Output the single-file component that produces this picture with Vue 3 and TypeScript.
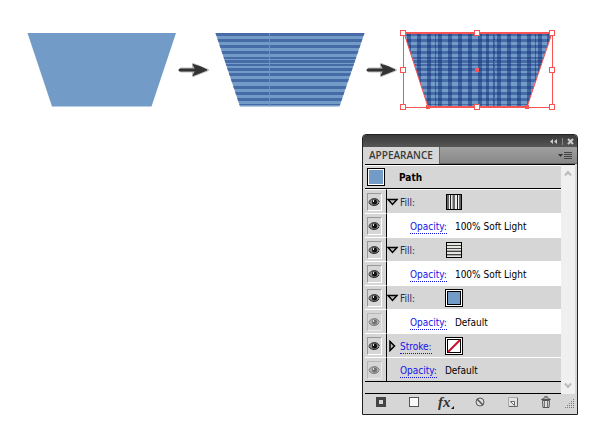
<script setup lang="ts">
interface Row {
  kind: 'fill' | 'stroke' | 'opacity'
  label: string
  value?: string
  swatch?: 'vertical' | 'horizontal' | 'solid' | 'none'
  grey?: boolean
  dim?: boolean
  nested?: boolean
}

const rows: Row[] = [
  { kind: 'fill', label: 'Fill:', swatch: 'vertical', grey: true },
  { kind: 'opacity', label: 'Opacity:', value: '100% Soft Light', nested: true },
  { kind: 'fill', label: 'Fill:', swatch: 'horizontal', grey: true },
  { kind: 'opacity', label: 'Opacity:', value: '100% Soft Light', nested: true },
  { kind: 'fill', label: 'Fill:', swatch: 'solid', grey: true },
  { kind: 'opacity', label: 'Opacity:', value: 'Default', nested: true, dim: true },
  { kind: 'stroke', label: 'Stroke:', swatch: 'none', grey: true },
  { kind: 'opacity', label: 'Opacity:', value: 'Default', grey: true, dim: true },
]

// [offset, thickness] of the dark bands in the striped pattern
const bands: [number, number][] = [
  [0, 3], [6, 3], [12, 3], [18, 3], [24, 2], [27, 3], [31, 2], [35, 3],
  [40, 3], [46, 3], [53, 3], [59, 3], [65, 3], [71, 1],
]
// [offset, thickness] of the vertical bands in the plaid pattern
const columns: [number, number][] = [
  [7, 4], [17, 4], [27, 4], [35, 1], [38, 4], [48, 4], [58, 4], [68, 4],
  [78, 4], [86, 3], [93, 2], [97, 4], [107, 4], [117, 4],
  [127, 4], [135, 1], [138, 4], [147, 3],
]
const handles: [number, number][] = [
  [3, 5], [77, 5], [152, 5], [3, 42], [152, 42], [3, 79], [77, 79], [152, 79],
]
</script>

<template>
  <main class="page">
    <section class="steps" aria-label="Pattern steps">
      <svg class="plain" width="150" height="84" viewBox="0 0 150 84">
        <path d="M.5 5H149L124.500 78.500H25Z" fill="#729bc7" />
      </svg>
      <svg class="arrow" width="32" height="18" viewBox="0 0 32 18">
        <path d="M3 7.500H15V3L30 9 15 15V10.500H3Z" fill="#aaa" stroke="#bbb" stroke-width="2" stroke-linejoin="round" />
        <path d="M2 9H18" stroke="#333" stroke-width="3" stroke-linecap="round" />
        <path d="M15 3.500Q22 5 29 9Q22 12 15 14.500L18 9Z" fill="#333" stroke="#333" stroke-linejoin="round" />
      </svg>
      <svg class="striped" width="150" height="84" viewBox="0 0 150 84">
        <clipPath id="pocket-b"><path d="M.5 5H149.500L124.500 78.500H25Z" /></clipPath>
        <g clip-path="url(#pocket-b)">
          <rect width="150" height="84" fill="#729bc7" />
          <rect v-for="b in bands" :key="b[0]" :y="b[0] + 5" width="150" :height="b[1]" fill="#466ba6" />
          <rect x="54" width="1" height="84" fill="#729bc7" opacity=".75" />
        </g>
      </svg>
      <svg class="arrow" width="32" height="18" viewBox="0 0 32 18">
        <path d="M3 7.500H15V3L30 9 15 15V10.500H3Z" fill="#aaa" stroke="#bbb" stroke-width="2" stroke-linejoin="round" />
        <path d="M2 9H18" stroke="#333" stroke-width="3" stroke-linecap="round" />
        <path d="M15 3.500Q22 5 29 9Q22 12 15 14.500L18 9Z" fill="#333" stroke="#333" stroke-linejoin="round" />
      </svg>
      <svg class="plaid" width="156" height="84" viewBox="0 0 156 84">
        <clipPath id="pocket-c"><path d="M4 5H152L127 79H28Z" /></clipPath>
        <g clip-path="url(#pocket-c)">
          <rect width="156" height="84" fill="#729bc7" />
          <rect v-for="b in bands" :key="b[0]" :y="b[0] + 5" width="156" :height="b[1]" fill="#466ba6" />
          <rect v-for="c in columns" :key="c[0]" class="weave" :x="c[0]" :width="c[1]" height="84" />
          <path d="M94.500 5V79" stroke="#466ba6" stroke-dasharray="4 3" />
        </g>
        <g fill="none" stroke="#f95454">
          <path d="M3.500 5.500H152.500V79.500H3.500Z" />
          <path d="M4 5L28 79M152 5L127 79" />
          <path d="M4 5H152M28 79H127" stroke-width="2" />
        </g>
        <path d="M75 40h4v4h-4ZM26 77h4v4h-4ZM125 77h4v4h-4Z" fill="#f95454" />
        <rect v-for="(h, i) in handles" :key="i" :x="h[0] - 2.500" :y="h[1] - 2.500" width="5" height="5" fill="#fff" stroke="#f95454" />
      </svg>
    </section>

    <section class="panel" aria-label="Appearance">
      <header class="titlebar">
        <button class="bare" aria-label="Collapse">
          <svg width="9" height="7" viewBox="0 0 9 7"><path d="M4 1V6L1 3.500ZM8 1V6L5 3.500Z" fill="#ccc" /></svg>
        </button>
        <span class="divider"></span>
        <button class="bare" aria-label="Close">
          <svg width="7" height="7" viewBox="0 0 7 7"><path d="M1 1L6 6M6 1L1 6" stroke="#ccc" stroke-width="2" /></svg>
        </button>
      </header>
      <div class="tabs">
        <button class="tab">APPEARANCE</button>
        <button class="bare menu" aria-label="Panel menu">
          <svg width="15" height="9" viewBox="0 0 15 9"><path d="M0 3H5L2.500 6Z" fill="#333" /><path d="M6 1.500H14M6 3.500H14M6 5.500H14M6 7.500H14" stroke="#444" /></svg>
        </button>
      </div>
      <div class="body">
        <div class="list">
          <div class="path-row">
            <span class="thumb"></span>
            <strong>Path</strong>
          </div>
          <div v-for="(row, i) in rows" :key="i" class="row" :class="{ grey: row.grey }">
            <button class="eye" :class="{ dim: row.dim }" aria-label="Toggle visibility">
              <svg width="12" height="11" viewBox="0 0 12 11">
                <path d="M.5 5.500Q3 1.500 6.500 1.500T11.500 5.500Q9 8.500 6 8.500T.5 5.500Z" fill="#888" />
                <path d="M.5 5Q3 1.500 6.500 1.500Q10 1.500 11.500 5M1 6Q3 8.500 6 8.500Q9.500 8.500 11 6" fill="none" stroke="#222" />
                <circle cx="6.500" cy="5" r="2.500" fill="#111" /><rect x="5" y="3" width="1" height="2" fill="#ddd" />
              </svg>
            </button>
            <div class="cell" :class="[row.kind, { nested: row.nested }]">
              <button v-if="row.kind !== 'opacity'" class="bare twist" aria-label="Expand">
                <svg v-if="row.kind === 'fill'" width="12" height="10" viewBox="0 0 12 10"><path d="M1 2.500H10L5.500 7.500Z" fill="#bbb" stroke="#000" stroke-width="1.500" /></svg>
                <svg v-else width="12" height="12" viewBox="0 0 12 12"><path d="M3 1.500V10.500L7.500 6Z" fill="#bbb" stroke="#000" stroke-width="1.500" /></svg>
              </button>
              <span v-if="row.kind === 'fill'" class="fill-label">{{ row.label }}</span>
              <a v-else href="#">{{ row.label }}</a>
              <span v-if="row.value" class="value">{{ row.value }}</span>
              <span v-if="row.swatch" class="slot">
                <svg width="18" height="18" viewBox="0 0 18 18">
                  <template v-if="row.swatch === 'vertical'">
                    <rect x="1.500" y="1.500" width="15" height="15" fill="#eee" stroke="#000" />
                    <path d="M3 2V16M9 2V16M15 2V16" stroke="#666" stroke-width="2" /><path d="M5.500 2V16M12.500 2V16" stroke="#222" /><path d="M7.500 2V16" stroke="#aaa" />
                  </template>
                  <template v-else-if="row.swatch === 'horizontal'">
                    <rect x="1.500" y="1.500" width="15" height="15" fill="#e4e8e0" stroke="#000" />
                    <path d="M2 4.500H16M2 7.500H16M2 10.500H16M2 13.500H16" stroke="#444" /><path d="M2 9.500H16M2 14.500H16" stroke="#aaa" />
                  </template>
                  <template v-else>
                    <rect x=".5" y=".5" width="17" height="17" fill="#fff" stroke="#000" />
                    <rect x="2.500" y="2.500" width="13" height="13" :fill="row.swatch === 'solid' ? '#729bc7' : '#fff'" stroke="#000" />
                    <path v-if="row.swatch === 'none'" d="M3 15L15 3" stroke="#c8102e" stroke-width="2" />
                  </template>
                </svg>
              </span>
            </div>
          </div>
          <div class="drop"></div>
        </div>
        <div class="scroll">
          <button class="bare" aria-label="Scroll up"><svg width="8" height="7" viewBox="0 0 8 7"><path d="M1 5.500L4 2L7 5.500" fill="none" stroke="#bbb" stroke-width="2" /></svg></button>
          <button class="bare" aria-label="Scroll down"><svg width="8" height="7" viewBox="0 0 8 7"><path d="M1 1.500L4 5L7 1.500" fill="none" stroke="#bbb" stroke-width="2" /></svg></button>
        </div>
      </div>
      <footer class="tools">
        <div class="icons">
          <button class="bare" aria-label="Add stroke"><svg width="18" height="14" viewBox="0 0 18 14"><rect x="5.500" y="3.500" width="7" height="7" fill="#d6d6d6" stroke="#444" stroke-width="3" /></svg></button>
          <button class="bare" aria-label="Add fill"><svg width="18" height="14" viewBox="0 0 18 14"><rect x="4.500" y="2.500" width="9" height="9" fill="#fafafa" stroke="#555" /></svg></button>
          <button class="bare fx" aria-label="Add effect"><i>fx</i><svg width="3" height="3" viewBox="0 0 3 3"><path d="M3 0V3H0Z" fill="#111" /></svg></button>
          <button class="bare" aria-label="Clear appearance"><svg width="18" height="14" viewBox="0 0 18 14"><circle cx="9" cy="7" r="4" fill="#ddd" stroke="#555" /><path d="M6 4L12 10" stroke="#555" stroke-width="1.500" /></svg></button>
          <button class="bare" aria-label="Duplicate item"><svg width="18" height="14" viewBox="0 0 18 14"><path d="M4.500 2.500H13.500V11.500H4.500Z" fill="#e4e4e4" stroke="#aaa" /><path d="M13.500 3V11.500H5" fill="none" stroke="#666" /><path d="M6.500 6.500H10.500V10.500Z" fill="#fff" stroke="#666" /></svg></button>
          <button class="bare" aria-label="Delete item"><svg width="18" height="14" viewBox="0 0 18 14"><path d="M5.500 5.500H12.500L12 12.500H6Z" fill="#ddd" stroke="#555" /><path d="M4.500 4.500Q9 1 13.500 4.500Z" fill="#eee" stroke="#555" /><path d="M7.500 2.500V1.500H10.500V2.500M7.500 6V12M10.500 6V12" fill="none" stroke="#777" /></svg></button>
        </div>
        <svg class="grip" width="10" height="10" viewBox="0 0 10 10"><path d="M8 .5H10M6 2.500H10M4 4.500H10M2 6.500H10M0 8.500H10" stroke="#777" stroke-dasharray="1 1" /></svg>
      </footer>
    </section>
  </main>
</template>

<style>
body {
  background: #fff;
}
</style>

<style scoped>
.page {
  font: 10px/14px "DejaVu Sans Condensed", "DejaVu Sans", "Noto Sans", sans-serif;
  color: #000;
  padding: 28px 22px 0 27px;
}
.steps {
  display: flex;
  align-items: center;
}
.arrow {
  margin: 0 4px 0 1px;
}
.striped {
  margin-left: 1px;
}
.plaid {
  margin-left: -2px;
}
svg {
  display: block;
  flex: none;
}
.weave {
  fill: #0f2f77;
  opacity: 0.5;
}
.panel {
  box-sizing: border-box;
  width: fit-content;
  margin: 22px 0 0 auto;
  border: 1px solid #222;
  border-radius: 4px 4px 0 0;
  background: #d6d6d6;
  overflow: hidden;
}
button {
  font: inherit;
  color: inherit;
  margin: 0;
  border: 0;
}
.bare {
  padding: 0;
  background: none;
}
.titlebar {
  display: flex;
  align-items: center;
  justify-content: flex-end;
  gap: 4px;
  height: 12px;
  padding-right: 3px;
  background: linear-gradient(#3a3a3a, #565656);
}
.divider {
  width: 1px;
  height: 7px;
  background: #888;
}
.tabs {
  display: flex;
  align-items: stretch;
  justify-content: space-between;
  height: 17px;
  background: linear-gradient(#a0a0a0, #888);
  border-bottom: 1px solid #666;
  box-sizing: border-box;
}
.tab {
  margin-bottom: -1px;
  padding: 0 6px;
  border-right: 1px solid #666;
  background: #d6d6d6;
  color: #3a3a3a;
  font: 600 10px/17px "Open Sans", sans-serif;
}
.menu {
  padding-right: 4px;
}
.body {
  display: flex;
  margin: 0 2px;
  border-top: 1px solid #000;
}
.list {
  width: 196px;
  border-bottom: 1px solid #000;
}
.path-row {
  display: flex;
  align-items: center;
  gap: 14px;
  height: 24px;
  box-sizing: border-box;
  border-top: 1px solid #fff;
  border-bottom: 1px solid #000;
  padding-left: 2px;
}
.path-row strong {
  padding-top: 2px;
}
.thumb {
  width: 16px;
  height: 16px;
  border: 1px solid #000;
  background: #729bc7;
  box-shadow: inset 0 0 0 1px #fff;
}
.row {
  display: flex;
  height: 24px;
  background: #fff;
}
.eye {
  width: 22px;
  padding: 0 0 0 2px;
  background: #d6d6d6;
  border-top: 1px solid #fff;
  border-right: 1px solid #000;
}
.eye svg {
  box-sizing: content-box;
  padding: 3px 1px 2px 0;
  border: 1px solid #999;
  border-right-color: #fff;
  border-bottom-color: #fff;
}
.dim svg {
  opacity: 0.5;
}
.cell {
  position: relative;
  flex: 1;
  display: flex;
  align-items: center;
  border-top: 1px solid #fff;
}
.grey .cell {
  background: #d6d6d6;
}
.opacity {
  padding-left: 13px;
}
.nested {
  padding-left: 23px;
}
a {
  margin-top: 2px;
  color: #1414e8;
  text-decoration: none;
  border-bottom: 1px dotted #1414e8;
  line-height: 13px;
}
.fill-label {
  margin-top: 2px;
  color: #1c2a60;
}
.value {
  margin: 2px 0 0 8px;
}
.twist {
  width: 13px;
}
.slot {
  position: absolute;
  left: 58px;
}
.drop {
  height: 11px;
  border-top: 1px solid #000;
}
.scroll {
  display: flex;
  flex-direction: column;
  align-items: center;
  justify-content: space-between;
  width: 14px;
  padding: 5px 0;
  box-sizing: border-box;
  background: #f0f0f0;
}
.tools {
  display: flex;
  align-items: center;
  height: 15px;
  padding-bottom: 5px;
}
.icons {
  display: flex;
  align-items: center;
  gap: 15px;
  padding-left: 9px;
}
.fx {
  display: flex;
  align-items: flex-end;
  width: 18px;
  color: #333;
  font: bold 15px/14px "Liberation Serif", serif;
}
.grip {
  align-self: flex-end;
  margin: 0 2px 0 auto;
}
</style>
